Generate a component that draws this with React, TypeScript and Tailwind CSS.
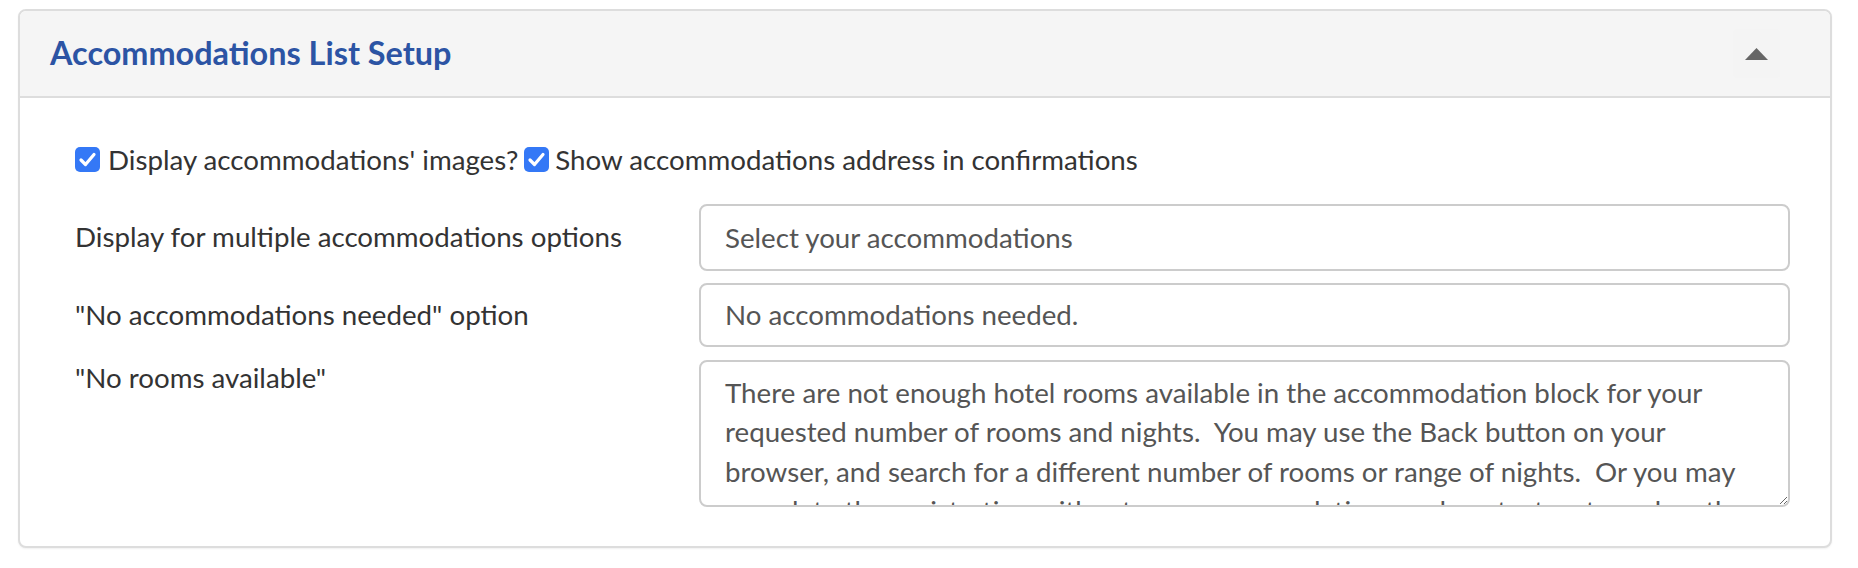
import React from 'react';

const font = { fontFamily: 'Lato, "Open Sans", "Liberation Sans", sans-serif' };

const Check: React.FC = () => (
  <svg width="25" height="25" viewBox="0 0 25 25" className="shrink-0">
    <rect x="0" y="0" width="25" height="25" rx="5" fill="#3478f6" />
    <path d="M6 13 L10.5 17.5 L19 7.5" fill="none" stroke="#fff" strokeWidth="3.2" strokeLinecap="round" strokeLinejoin="round" />
  </svg>
);

const noRooms =
  'There are not enough hotel rooms available in the accommodation block for your requested number of rooms and nights.  You may use the Back button on your browser, and search for a different number of rooms or range of nights.  Or you may complete the registration without any accommodations and contact us to make other arrangements.';

export default function App() {
  return (
    <div className="bg-white min-h-[568px] pt-[9px] pl-[18px] pr-[26px]" style={font}>
      <div className="bg-white border-2 border-[#dddddd] rounded-lg shadow-[0_1px_2px_rgba(0,0,0,0.06)]">
        <div className="h-[87px] bg-[#f5f5f5] border-b-2 border-[#dddddd] rounded-t-md flex items-center justify-between pl-[30px] pr-[50px]">
          <h3 className="text-[32.4px] font-bold text-[#2c54a4] leading-none">Accommodations List Setup</h3>
          <button className="w-[47px] h-[49px] rounded bg-[#f4f4f4] flex items-center justify-center">
            <svg width="23" height="12" viewBox="0 0 23 12">
              <path d="M11.5 0 L23 12 L0 12 Z" fill="#666666" />
            </svg>
          </button>
        </div>

        <div className="pt-[42px] pb-[39px] pl-[55px] pr-[40px] text-[27.7px] leading-[39.5px] text-[#333333]">
          <div className="flex items-center">
            <Check />
            <span className="ml-[8px]">Display accommodations' images?</span>
            <span className="ml-[6px]">
              <Check />
            </span>
            <span className="ml-[6px]">Show accommodations address in confirmations</span>
          </div>

          <div className="flex items-center mt-[24px]">
            <label className="w-[624px] shrink-0">Display for multiple accommodations options</label>
            <input
              className="flex-1 h-[67px] border-2 border-[#cccccc] rounded-lg px-[24px] text-[#555555] outline-none"
              defaultValue="Select your accommodations"
            />
          </div>

          <div className="flex items-center mt-[12px]">
            <label className="w-[624px] shrink-0">"No accommodations needed" option</label>
            <input
              className="flex-1 h-[64px] border-2 border-[#cccccc] rounded-lg px-[24px] text-[#555555] outline-none"
              defaultValue="No accommodations needed."
            />
          </div>

          <div className="flex items-start mt-[13px]">
            <label className="w-[624px] shrink-0 -mt-[2px]">"No rooms available"</label>
            <textarea
              className="flex-1 h-[147px] border-2 border-[#cccccc] rounded-lg px-[24px] pt-[11px] text-[#555555] outline-none overflow-hidden"
              defaultValue={noRooms}
            />
          </div>
        </div>
      </div>
    </div>
  );
}
